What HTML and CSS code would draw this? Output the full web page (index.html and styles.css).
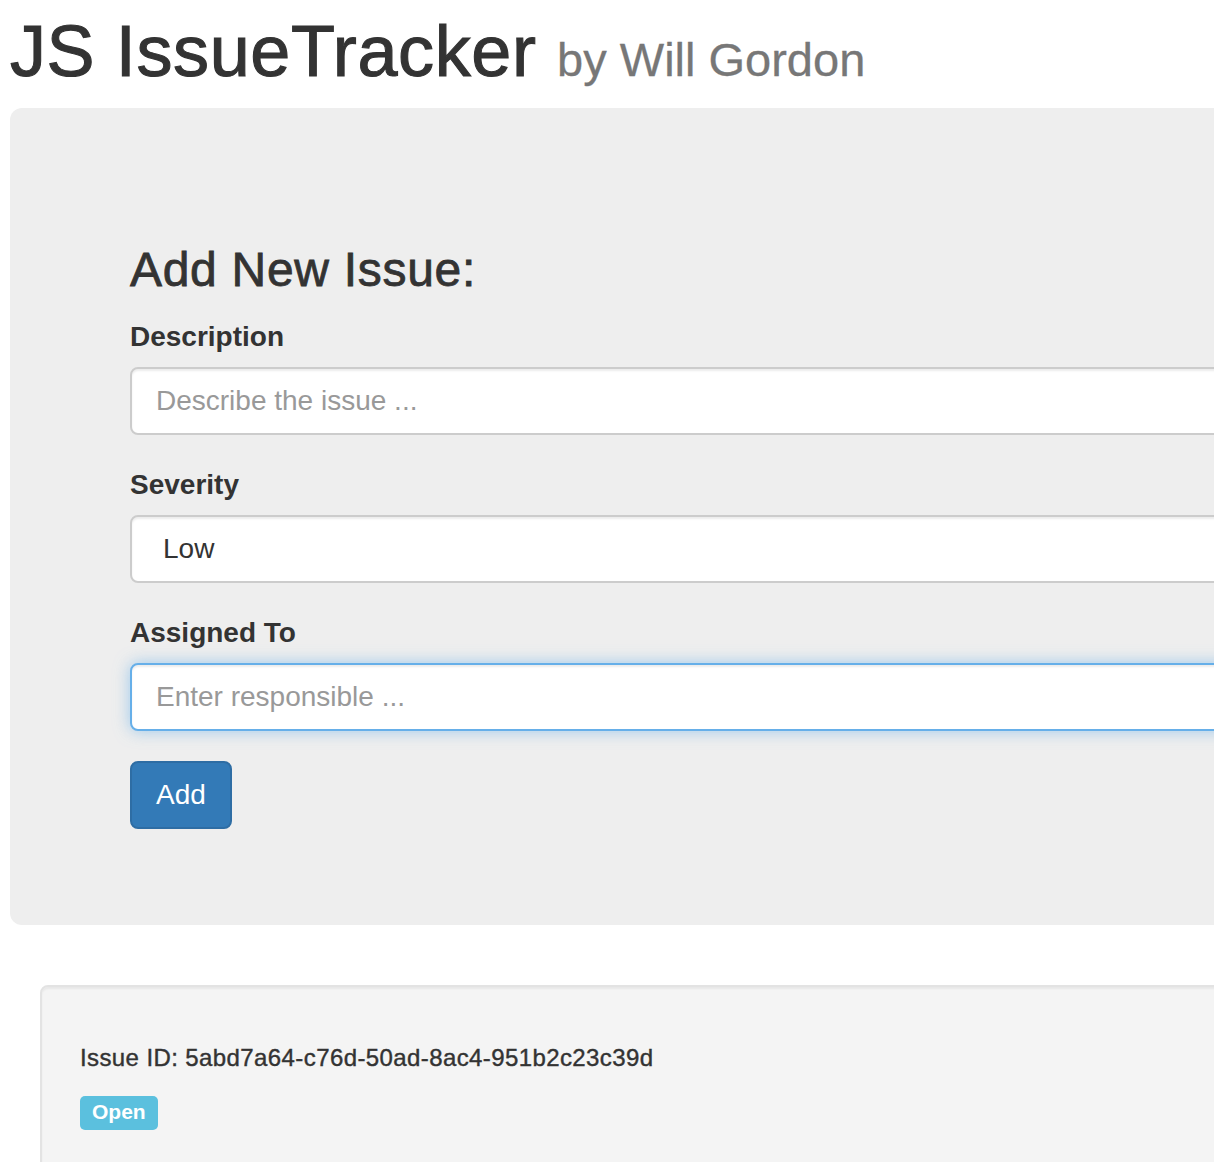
FILE: index.html
```html
<!DOCTYPE html>
<html>
<head>
<meta charset="utf-8">
<title>JS IssueTracker</title>
<link rel="stylesheet" href="styles.css">
</head>
<body>
<div class="page">
  <h1 class="title">JS IssueTracker <small>by Will Gordon</small></h1>
  <div class="jumbotron">
    <h3 class="form-title">Add New Issue:</h3>
    <form class="issue-form">
      <div class="form-group">
        <label class="field-label">Description</label>
        <input class="form-control" type="text" placeholder="Describe the issue ...">
      </div>
      <div class="form-group">
        <label class="field-label">Severity</label>
        <select class="form-control select-control">
          <option>Low</option>
          <option>Medium</option>
          <option>High</option>
        </select>
      </div>
      <div class="form-group">
        <label class="field-label">Assigned To</label>
        <input class="form-control focused" type="text" placeholder="Enter responsible ...">
      </div>
      <button type="button" class="btn-primary">Add</button>
    </form>
  </div>
  <div class="issues">
    <div class="well">
      <h6 class="issue-id">Issue ID: 5abd7a64-c76d-50ad-8ac4-951b2c23c39d</h6>
      <div class="status"><span class="label-info">Open</span></div>
    </div>
  </div>
</div>
</body>
</html>
```
FILE: styles.css
```css
html, body {
  margin: 0;
  padding: 0;
  overflow: hidden;
  background: #fff;
}
body {
  font-family: "Liberation Sans", Arial, Helvetica, sans-serif;
  color: #333;
}
.page {
  width: 1500px;
  padding-left: 10px;
  box-sizing: border-box;
}
.title {
  margin: 12px 0 17px;
  font-size: 72px;
  line-height: 79.2px;
  font-weight: 500;
  color: #333;
  white-space: nowrap;
  letter-spacing: 0.6px;
  -webkit-text-stroke: 1.1px #333;
}
.title small {
  font-size: 47px;
  line-height: 1;
  font-weight: 400;
  color: #777;
  letter-spacing: 0;
  -webkit-text-stroke: 0.3px #777;
}
.jumbotron {
  background: #eee;
  border-radius: 12px;
  padding: 96px 120px;
  margin: 0 0 60px;
}
.form-title {
  margin: 40px 0 20px;
  font-size: 48px;
  line-height: 52.8px;
  font-weight: 500;
  color: #333;
  letter-spacing: 0.7px;
  -webkit-text-stroke: 0.8px #333;
}
.form-group {
  margin-bottom: 30px;
}
.field-label {
  display: block;
  font-size: 28px;
  line-height: 40px;
  font-weight: 700;
  margin-bottom: 10px;
  color: #333;
}
.form-control {
  display: block;
  width: 100%;
  box-sizing: border-box;
  height: 68px;
  padding: 12px 24px;
  font-family: "Liberation Sans", Arial, Helvetica, sans-serif;
  font-size: 28px;
  line-height: 40px;
  color: #555;
  background: #fff;
  border: 2px solid #ccc;
  border-radius: 8px;
  box-shadow: inset 0 2px 2px rgba(0,0,0,.075);
  outline: none;
}
.form-control::placeholder {
  color: #999;
}
.select-control {
  appearance: none;
  -webkit-appearance: none;
  padding-left: 31px;
  color: #333;
}
.form-control.focused {
  border-color: #66afe9;
  box-shadow: inset 0 2px 2px rgba(0,0,0,.075), 0 0 16px rgba(102,175,233,.6);
}
.btn-primary {
  display: inline-block;
  padding: 12px 24px;
  font-family: "Liberation Sans", Arial, Helvetica, sans-serif;
  font-size: 28px;
  line-height: 40px;
  color: #fff;
  background: #337ab7;
  border: 2px solid #2e6da4;
  border-radius: 8px;
  cursor: pointer;
}
.issues {
  padding: 0 30px;
}
.well {
  background: #f4f4f4;
  border: 2px solid #e3e3e3;
  border-radius: 8px;
  padding: 38px;
  height: 400px;
  box-shadow: inset 0 2px 2px rgba(0,0,0,.05);
}
.issue-id {
  margin: 20px 0 0;
  font-size: 24px;
  line-height: 26.4px;
  font-weight: 500;
  color: #333;
  letter-spacing: 0.4px;
  -webkit-text-stroke: 0.4px #333;
}
.status {
  margin-top: 25px;
}
.label-info {
  display: inline-block;
  background: #5bc0de;
  color: #fff;
  font-size: 21px;
  font-weight: 700;
  line-height: 24px;
  padding: 4px 12px 6px;
  border-radius: 5px;
}
```
